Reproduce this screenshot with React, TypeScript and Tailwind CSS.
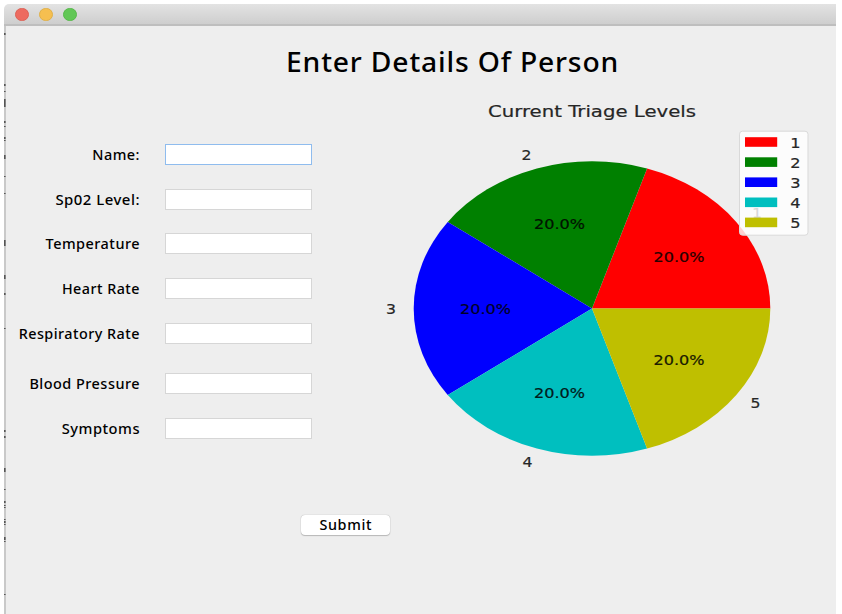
const fields = [
  { label: 'Name:', gap: 'h-[45px]', stretch: 'scale-x-[1.07]', focused: true },
  { label: 'Sp02 Level:', gap: 'h-[44px]', stretch: 'scale-x-[1.105]' },
  { label: 'Temperature', gap: 'h-[45px]', stretch: 'scale-x-[1.07]' },
  { label: 'Heart Rate', gap: 'h-[45px]', stretch: 'scale-x-[1.06]' },
  { label: 'Respiratory Rate', gap: 'h-[50px]', stretch: 'scale-x-[1.063]' },
  { label: 'Blood Pressure', gap: 'h-[45px]', stretch: 'scale-x-[1.07]' },
  { label: 'Symptoms', gap: 'h-[45px]', stretch: 'scale-x-[1.085]' },
];

const slices = [
  { name: '1', color: '#ff0000', start: 0, px: 679, py: 262, lx: 757, ly: 217.5 },
  { name: '2', color: '#008000', start: 72, px: 559.5, py: 229, lx: 526.5, ly: 159.5 },
  { name: '3', color: '#0000ff', start: 144, px: 485.5, py: 313.5, lx: 391, ly: 313.5 },
  { name: '4', color: '#00bfbf', start: 216, px: 559.5, py: 397.6, lx: 527.5, ly: 467.3 },
  { name: '5', color: '#bfbf00', start: 288, px: 679, py: 365, lx: 755.5, ly: 408 },
];

const marks = [
  [33, 2], [84, 2], [91, 1], [99, 8], [121, 2], [126, 1], [137, 2], [140, 1], [155, 4],
  [176, 1], [193, 1], [240, 6], [275, 4], [293, 2], [328, 1], [430, 2], [436, 2],
  [468, 4], [489, 1], [501, 2], [505, 1], [507, 1], [519, 1], [521, 2], [524, 1],
  [537, 3], [541, 1], [594, 1],
];

const CX = 592;
const CY = 308.5;
const RX = 178.3;
const RY = 147.3;

function slicePath(start: number) {
  const point = (deg: number) => {
    const a = (deg * Math.PI) / 180;
    return `${CX + RX * Math.cos(a)} ${CY - RY * Math.sin(a)}`;
  };
  return `M${CX} ${CY} L${point(start)} A${RX} ${RY} 0 0 0 ${point(start + 72)} Z`;
}

function TriageChart() {
  return (
    <svg
      className="block h-[385px] w-[456px] font-['DejaVu_Sans',sans-serif] text-[13.3px]"
      viewBox="380 95 456 385"
      fill="#262626"
    >
      <text x="488" y="117.3" fontSize="16" textLength="208" lengthAdjust="spacingAndGlyphs" stroke="#262626" strokeWidth="0.2">
        Current Triage Levels
      </text>
      {slices.map((s) => (
        <path key={s.name} d={slicePath(s.start)} fill={s.color} />
      ))}
      {slices.map((s) => (
        <g key={s.name}>
          <text x={s.px - 25.5} y={s.py} textLength="51" lengthAdjust="spacingAndGlyphs" fill="#000" fillOpacity="0.85" stroke="#000" strokeWidth="0.2">
            20.0%
          </text>
          <text x={s.lx - 5} y={s.ly} textLength="10" lengthAdjust="spacingAndGlyphs" stroke="#262626" strokeWidth="0.2">
            {s.name}
          </text>
        </g>
      ))}
      <rect x="739.5" y="131.2" width="68.5" height="104" rx="3" fill="#fff" fillOpacity="0.82" stroke="#d9d9d9" />
      {slices.map((s, i) => (
        <g key={s.name}>
          <rect x="745" y={137.2 + i * 20.1} width="32.2" height="9.6" fill={s.color} />
          <text x="790.3" y={147.8 + i * 20.1} textLength="10.3" lengthAdjust="spacingAndGlyphs" stroke="#262626" strokeWidth="0.2">
            {s.name}
          </text>
        </g>
      ))}
    </svg>
  );
}

export default function App() {
  return (
    <div className="h-[614px] w-[842px] overflow-hidden bg-white pl-[4px] pt-[4px] font-['Noto_Sans',sans-serif] text-black">
      <div className="flex h-[610px] w-[832px] flex-col overflow-hidden rounded-tl-[5px]">
        <div className="flex h-[22px] shrink-0 items-center gap-[10px] border-b-2 border-[#bebebe] bg-linear-to-b from-[#e3e3e3] to-[#cecece] pl-[11px]">
          <span className="h-[13px] w-[14px] rounded-full border border-[#dc6257] bg-[#ed6b60]" />
          <span className="h-[13px] w-[14px] rounded-full border border-[#dfb049] bg-[#f6bf50]" />
          <span className="h-[13px] w-[14px] rounded-full border border-[#57b84b] bg-[#62c756]" />
        </div>
        <div className="flex grow bg-[#eeeeee]">
          <svg className="h-[588px] w-[2px] shrink-0 bg-[#c9c9c9]" viewBox="0 26 2 588">
            {marks.map(([y, h]) => (
              <rect key={y} x="0" y={y} width="1.6" height={h} fill="#555" />
            ))}
          </svg>
          <div className="flex grow flex-col">
            <h1 className="mt-[16px] ml-[280px] h-[53px] w-fit origin-left scale-x-[1.047] whitespace-nowrap text-[27px] leading-[40px] font-medium tracking-[0.8px]">
              Enter Details Of Person
            </h1>
            <div className="flex">
              <form className="w-[374px] shrink-0 pt-[49px]">
                {fields.map((f) => (
                  <div key={f.label} className={`flex items-start ${f.gap}`}>
                    <label
                      className={`w-[134px] origin-right pt-px text-right text-[13.5px] leading-[20px] font-medium tracking-[0.45px] whitespace-nowrap ${f.stretch}`}
                    >
                      {f.label}
                    </label>
                    <input
                      className={`ml-[25px] h-[21px] w-[147px] border bg-white outline-none ${f.focused ? 'border-[#8fbcee]' : 'border-[#d6d6d6]'}`}
                    />
                  </div>
                ))}
                <button
                  type="button"
                  className="mt-[52px] ml-[295px] block h-[20px] w-[89px] rounded-[4px] bg-white text-[13.5px] leading-[20px] font-medium shadow-[0_0_1px_#999,0_1px_1px_#bbb]"
                >
                  <span className="inline-block scale-x-[1.065] tracking-[0.6px]">Submit</span>
                </button>
              </form>
              <TriageChart />
            </div>
          </div>
        </div>
      </div>
    </div>
  );
}
